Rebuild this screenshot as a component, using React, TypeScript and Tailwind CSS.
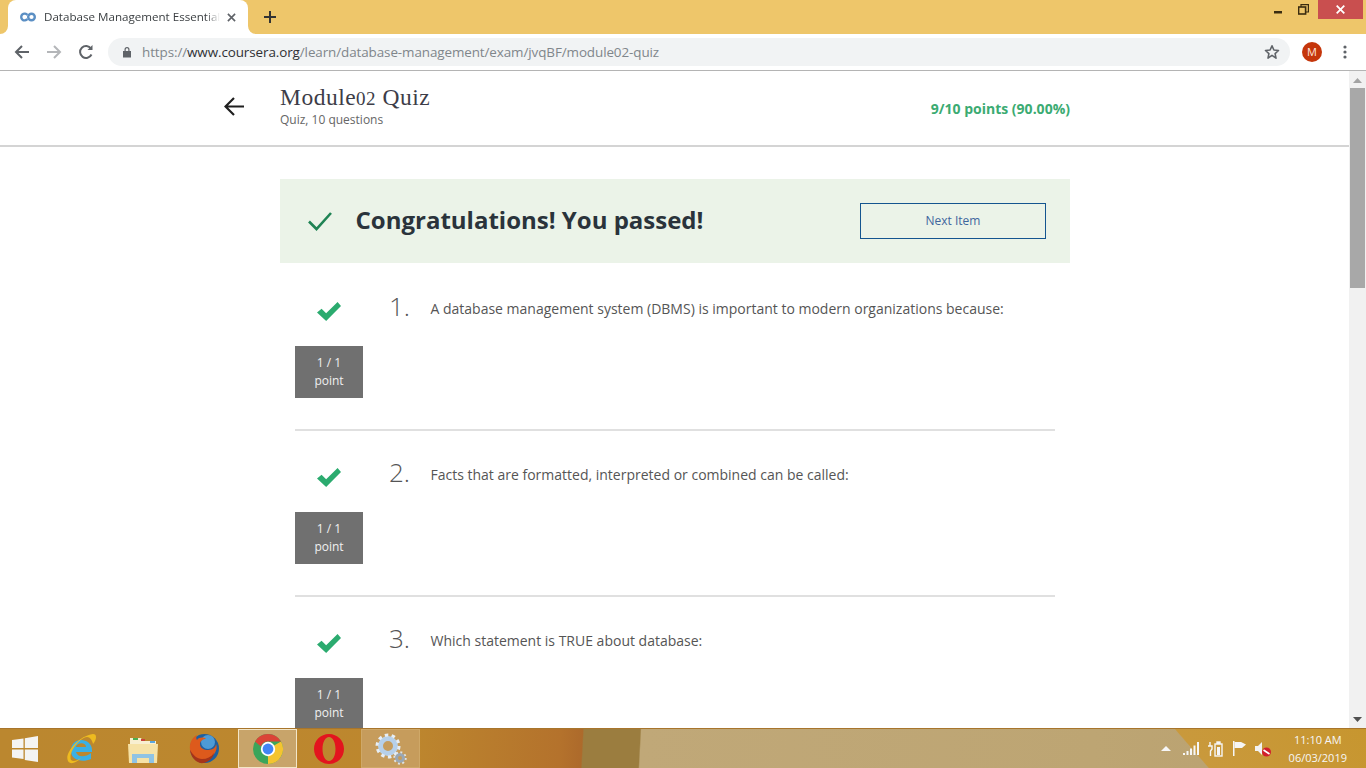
import React from "react";

const sans = "font-['Open_Sans',sans-serif]";

function Check() {
  return (
    <svg width="24" height="19" viewBox="2 1 21 17" preserveAspectRatio="none">
      <path d="M2 10.5 L6 7 L10 11 L20 1 L23 4.500 L10 18 Z" fill="#2bab6f" />
    </svg>
  );
}

function Question({ n, text, last }: { n: number; text: string; last?: boolean }) {
  return (
    <div className={`mx-[15px] flex h-[166px] shrink-0 flex-col ${last ? "" : "border-b-2 border-[#e0e0e0]"}`}>
      <div className="flex h-[81px] items-start">
        <div className="flex w-[68px] justify-center pt-[37px]">
          <Check />
        </div>
        <div className="ml-[26px] w-[41.500px] pt-[24px] text-[26px] leading-[34px] font-light text-[#555]">{n}.</div>
        <div className="pt-[34px] text-[14px] leading-[20px] text-[#555]">{text}</div>
      </div>
      <div className="flex h-[52px] w-[68px] flex-col items-center justify-center bg-[#707070] text-[12px] leading-[18.5px] text-[#f0f0f0]">
        <span>1 / 1</span>
        <span>point</span>
      </div>
    </div>
  );
}

function Tabbar() {
  return (
    <div className="flex h-[34px] shrink-0 bg-[#eec66a]">
      <div className="relative ml-[8px] flex h-[34px] w-[240px] items-center rounded-t-[8px] bg-white pl-[12px]">
        <svg className="absolute bottom-0 left-[-8px]" width="8" height="8" viewBox="0 0 8 8"><path d="M8 0A8 8 0 0 1 0 8H8Z" fill="#fff" /></svg>
        <svg className="absolute bottom-0 right-[-8px]" width="8" height="8" viewBox="0 0 8 8"><path d="M0 0A8 8 0 0 0 8 8H0Z" fill="#fff" /></svg>
        <svg width="16" height="10" viewBox="0 0 16 10" fill="none" stroke="#5b8fc4" strokeWidth="2.400">
          <path d="M7.400 3A3.400 3.400 0 1 0 7.400 7" />
          <circle cx="11.500" cy="5" r="3.300" />
        </svg>
        <span className={`ml-[8px] w-[176px] overflow-hidden text-[11.600px] leading-[16px] whitespace-nowrap text-[#3c4043] [mask-image:linear-gradient(to_right,black_92%,transparent)] ${sans}`}>
          Database Management Essentials
        </span>
        <svg className="ml-[7px]" width="9" height="9" viewBox="0 0 10 10" stroke="#5f6368" strokeWidth="1.8">
          <path d="M1 1 9 9M9 1 1 9" />
        </svg>
      </div>
      <svg className="ml-[16px] mt-[11px]" width="12" height="12" viewBox="0 0 12 12" stroke="#333" strokeWidth="2">
        <path d="M6 0v12M0 6h12" />
      </svg>
      <div className="ml-auto flex h-[19px] items-start">
        <svg className="mt-[8px]" width="9" height="9" viewBox="0 0 9 9">
          <rect x="0" y="3" width="8" height="2.500" fill="#3a2c10" />
        </svg>
        <svg className="ml-[15px] mt-[4px]" width="11" height="11" viewBox="0 0 11 11" fill="none" stroke="#3a2c10" strokeWidth="1.2">
          <rect x="0.6" y="3" width="7" height="7" strokeWidth="1.6" />
          <path d="M3 3V.6h7.400V8H8" />
        </svg>
        <div className="ml-[9px] mr-[3px] flex h-[19px] w-[45px] items-center justify-center bg-[#c94f4f]">
          <svg width="9" height="9" viewBox="0 0 9 9" stroke="#fff" strokeWidth="1.8">
            <path d="M.7.7l7.600 7.600M8.300.7.7 8.300" />
          </svg>
        </div>
      </div>
    </div>
  );
}

function Toolbar() {
  return (
    <div className="flex h-[37px] shrink-0 items-center border-b border-[#b4b4b4] bg-white">
      <svg className="ml-[14px]" width="16" height="16" viewBox="0 0 16 16" fill="none" stroke="#5f6368" strokeWidth="2">
        <path d="M15 8H2M8 2 2 8l6 6" />
      </svg>
      <svg className="ml-[16px]" width="16" height="16" viewBox="0 0 16 16" fill="none" stroke="#b4b6b9" strokeWidth="2">
        <path d="M1 8h13M8 2l6 6-6 6" />
      </svg>
      <svg className="ml-[16px]" width="16" height="16" viewBox="0 0 16 16" fill="none" stroke="#5f6368" strokeWidth="2">
        <path d="M13.500 10.500A6 6 0 1 1 13 4.500" />
        <path d="M14.500 1v5h-5z" fill="#5f6368" stroke="none" />
      </svg>
      <div className="ml-[14px] flex h-[28px] w-[1182px] items-center rounded-full bg-[#f1f3f4] pl-[14px]">
        <svg width="10" height="12" viewBox="0 0 10 12" fill="#5f6368">
          <path d="M1 5h8v6.500H1zM2.500 5V3.500a2.500 2.500 0 0 1 5 0V5H6.300V3.500a1.300 1.300 0 0 0-2.600 0V5z" />
        </svg>
        <span className="ml-[10px] text-[13.450px] leading-[20px] text-[#80868b] font-['Open_Sans',sans-serif] tracking-[-0.1px]">
          https://<span className="text-[#303134]">www.coursera.org</span>/learn/database-management/exam/jvqBF/module02-quiz
        </span>
        <svg className="ml-auto mr-[10px]" width="16" height="16" viewBox="0 0 16 16" fill="none" stroke="#5f6368" strokeWidth="1.6">
          <path d="M8 1.800l1.900 4.200 4.600.5-3.400 3.100.9 4.500L8 11.400l-4 2.700.9-4.500-3.400-3.100 4.600-.5z" strokeLinejoin="round" />
        </svg>
      </div>
      <div className={`ml-[12px] flex h-[20px] w-[20px] items-center justify-center rounded-full bg-[#c5360b] text-[11px] text-[#ffe8dc] ${sans}`}>M</div>
      <svg className="ml-[21px]" width="4" height="14" viewBox="0 0 4 14" fill="#5f6368">
        <circle cx="2" cy="2" r="1.600" />
        <circle cx="2" cy="7" r="1.600" />
        <circle cx="2" cy="12" r="1.600" />
      </svg>
    </div>
  );
}

function Scrollbar() {
  return (
    <div className="flex w-[17px] shrink-0 flex-col items-center bg-[#f1f1f1]">
      <svg className="mt-[7px]" width="9" height="5" viewBox="0 0 9 5"><path d="M4.500 0 9 5H0z" fill="#a3a3a3" /></svg>
      <div className="mt-[5px] h-[200px] w-[15px] bg-[#a8a8a8]" />
      <svg className="mt-auto mb-[6px]" width="9" height="5" viewBox="0 0 9 5"><path d="M0 0h9L4.500 5z" fill="#505050" /></svg>
    </div>
  );
}

function Page() {
  return (
    <div className={`flex min-w-0 flex-1 flex-col overflow-hidden bg-white ${sans}`}>
      <div className="flex h-[76px] shrink-0 items-start border-b-2 border-[#d4d4d4]">
        <div className="ml-[224px] mt-[26px] w-[56px]">
          <svg width="20" height="19" viewBox="0 0 20 19" fill="none" stroke="#1f1f1f" strokeWidth="2.2">
            <path d="M20 9.500H2M10 1 1.500 9.500 10 18" />
          </svg>
        </div>
        <div className="mt-[13px]">
          <div className="font-['Liberation_Serif',serif] text-[23.500px] leading-[26px] tracking-[0.5px] text-[#3d3d48]">
            Module<span className="text-[19px] leading-none">02</span> Quiz
          </div>
          <div className="pt-[1px] text-[12px] leading-[18px] text-[#666]">Quiz, 10 questions</div>
        </div>
        <div className="ml-auto mr-[279px] mt-[28px] text-[14px] leading-[20px] font-bold text-[#3bab72]">9/10 points (90.00%)</div>
      </div>
      <div className="ml-[280px] mt-[32px] flex w-[790px] flex-col">
        <div className="flex h-[84px] shrink-0 items-center bg-[#ebf3e8]">
          <svg className="ml-[28px]" width="24" height="20" viewBox="0 0 24 20" fill="none" stroke="#1f8354" strokeWidth="2.6">
            <path d="M1 10.500 8.500 18 23 2" />
          </svg>
          <div className="ml-[23.500px] -mt-[2px] text-[24px] leading-[32px] font-bold text-[#2a333b]">Congratulations! You passed!</div>
          <div className="ml-auto mr-[24px] flex h-[36px] w-[186px] items-center justify-center border border-[#14558f] text-[12px] text-[#3f669e]">Next Item</div>
        </div>
        <div className="flex flex-col pt-[2px]">
          <Question n={1} text="A database management system (DBMS) is important to modern organizations because:" />
          <Question n={2} text="Facts that are formatted, interpreted or combined can be called:" />
          <Question n={3} text="Which statement is TRUE about database:" last />
        </div>
      </div>
    </div>
  );
}

function Taskbar() {
  return (
    <div className="flex h-[40px] shrink-0 items-stretch overflow-hidden border-t border-[#a8752c] bg-[linear-gradient(49deg,transparent_86.300%,#c9993c_86.400%,#c7962f_100%),linear-gradient(93deg,#bb872f_0%,#bd872e_30%,#b4722c_41%,#ad6a2b_42.600%,#9b7d3f_42.700%,#9b7d3f_46.800%,#c0a878_46.900%,#bda573_80%,#b8a070_100%)]">
      <div className="flex w-[238px] items-center">
        <svg className="ml-[12px]" width="26" height="26" viewBox="0 0 26 26" fill="#f4f4f4">
          <path d="M0 4l11.500-1.600V12H0zM12.800 2.200 26 0v12H12.800zM0 13.500h11.500v9.600L0 21.500zM12.800 13.500H26V26l-13.200-2z" />
        </svg>
        <svg className="ml-[27px]" width="32" height="32" viewBox="0 0 32 32" fill="none">
          <path d="M16 7c6 0 11 4 11 10v2H11c1 5 9 6 15 1v6c-9 4-20 1-20-8 0-7 4-11 10-11zM11 14h10c0-5-9-5-10 0z" fill="#3bb0e4" />
          <path d="M3 28C-1 21 13 3 28 1c4 0 4 5 0 10-1-4-3-7-6-7C14 5 3 20 6 27c2 2 6 1 10-2-5 5-11 7-13 3z" fill="#eebb1f" />
        </svg>
        <svg className="ml-[30px]" width="32" height="30" viewBox="0 0 32 30">
          <path d="M3 4h11l2 3h13v6H3z" fill="#f8efd0" />
          <rect x="6" y="4" width="5" height="2" fill="#4caf50" />
          <rect x="14" y="5" width="4" height="2" fill="#c9423a" />
          <rect x="23" y="7" width="5" height="2" fill="#5aa7e0" />
          <path d="M1 10h30l-1 19H2z" fill="#f6e2a6" />
          <path d="M5 29v-9h22v9h-5v-5H10v5z" fill="#8fc3e4" />
        </svg>
        <svg className="ml-[29px]" width="32" height="32" viewBox="0 0 32 32">
          <circle cx="16.500" cy="15.500" r="14.500" fill="#1f5f9f" />
          <circle cx="20" cy="9" r="7" fill="#4d9bd6" />
          <path d="M2 17C1 9 5 4 9 2c-1 2-1 4 0 5 2-3 7-3 9-1-3 0-6 2-6 5 0 4 4 6 8 6 5 0 8-3 8-6 3 7-5 16-13 16C8 27 3 23 2 17z" fill="#dd5a1c" />
          <path d="M12 30C6 28 3 23 2 17c3 5 7 9 12 9 5 0 9-2 12-6-1 6-7 11-14 10z" fill="#a5341a" />
        </svg>
      </div>
      <div className="flex w-[59px] items-center justify-center border border-[#f3e6c8] bg-[#c8a46a]">
        <svg width="32" height="32" viewBox="0 0 32 32">
          <circle cx="16" cy="16" r="15" fill="#3ba55a" />
          <path d="M16 16 29 8.500A15 15 0 0 1 16 31z" fill="#f4c430" />
          <path d="M3 8.500A15 15 0 0 1 29 8.500H16a7.500 7.500 0 0 0-7 5z" fill="#db4437" />
          <circle cx="16" cy="16" r="7.200" fill="#fff" />
          <circle cx="16" cy="16" r="5.400" fill="#4285f4" />
        </svg>
      </div>
      <div className="flex w-[64px] items-center justify-center">
        <svg width="32" height="32" viewBox="0 0 32 32">
          <path fillRule="evenodd" d="M16 1c8.300 0 15 6.500 15 15s-6.700 15-15 15S1 24.500 1 16 7.700 1 16 1zm0 3c-3.800 0-6.500 5.300-6.500 12S12.200 28 16 28s6.500-5.300 6.500-12S19.800 4 16 4z" fill="#e3141e" />
        </svg>
      </div>
      <div className="flex w-[59px] items-center justify-center border border-[#cfa868] bg-[#c69c5c]">
        <svg width="32" height="32" viewBox="0 0 32 32" fill="none">
          <circle cx="13" cy="13" r="7.500" stroke="#b6d0ea" strokeWidth="5" />
          <circle cx="13" cy="13" r="11" stroke="#e6eef6" strokeWidth="3" strokeDasharray="3.500 3.400" />
          <circle cx="25" cy="25" r="3.500" stroke="#9aa7b4" strokeWidth="3" />
          <circle cx="25" cy="25" r="5.800" stroke="#dde4ea" strokeWidth="1.800" strokeDasharray="2 2.500" />
        </svg>
      </div>
      <div className="ml-auto flex items-center">
        <svg width="10" height="5" viewBox="0 0 10 5"><path d="M5 0l5 5H0z" fill="#f6f6f6" /></svg>
        <svg className="ml-[12px]" width="16" height="13" viewBox="0 0 16 13" fill="#f6f6f6">
          <path d="M0 11h2v2H0zM3.500 9h2v4h-2zM7 6.500h2V13H7zM10.500 3.500h2V13h-2zM14 0h2v13h-2z" />
        </svg>
        <svg className="ml-[8px]" width="16" height="16" viewBox="0 0 16 16" fill="none" stroke="#f6f6f6" strokeWidth="1.400">
          <path d="M3 1v4M1 5h4v3L3.500 10v5" />
          <rect x="8" y="3" width="7" height="12" />
          <rect x="10" y="1" width="3" height="1.500" fill="#f6f6f6" />
          <rect x="10" y="6" width="3" height="8" fill="#f6f6f6" stroke="none" />
        </svg>
        <svg className="ml-[9px]" width="15" height="15" viewBox="0 0 15 15">
          <path d="M1 0h1.500v15H1z" fill="#f6f6f6" />
          <path d="M2.500 1H9l5 2.500L10 7H2.500z" fill="#f6f6f6" />
        </svg>
        <svg className="ml-[8px]" width="16" height="16" viewBox="0 0 16 16">
          <path d="M0 5h3l4-4v13l-4-4H0z" fill="#f2f2f2" />
          <circle cx="11.500" cy="11" r="4.500" fill="#d11f2c" />
          <path d="M8.500 9l6 4" stroke="#fff" strokeWidth="1.600" />
        </svg>
        <div className={`ml-[18px] mr-[19px] text-center text-[11px] leading-[18px] text-[#f6f6f6] ${sans}`}>
          <div>11:10 AM</div>
          <div>06/03/2019</div>
        </div>
      </div>
    </div>
  );
}

export default function App() {
  return (
    <div className="flex h-[768px] w-[1366px] flex-col overflow-hidden bg-white">
      <Tabbar />
      <Toolbar />
      <div className="flex min-h-0 flex-1">
        <Page />
        <Scrollbar />
      </div>
      <Taskbar />
    </div>
  );
}
